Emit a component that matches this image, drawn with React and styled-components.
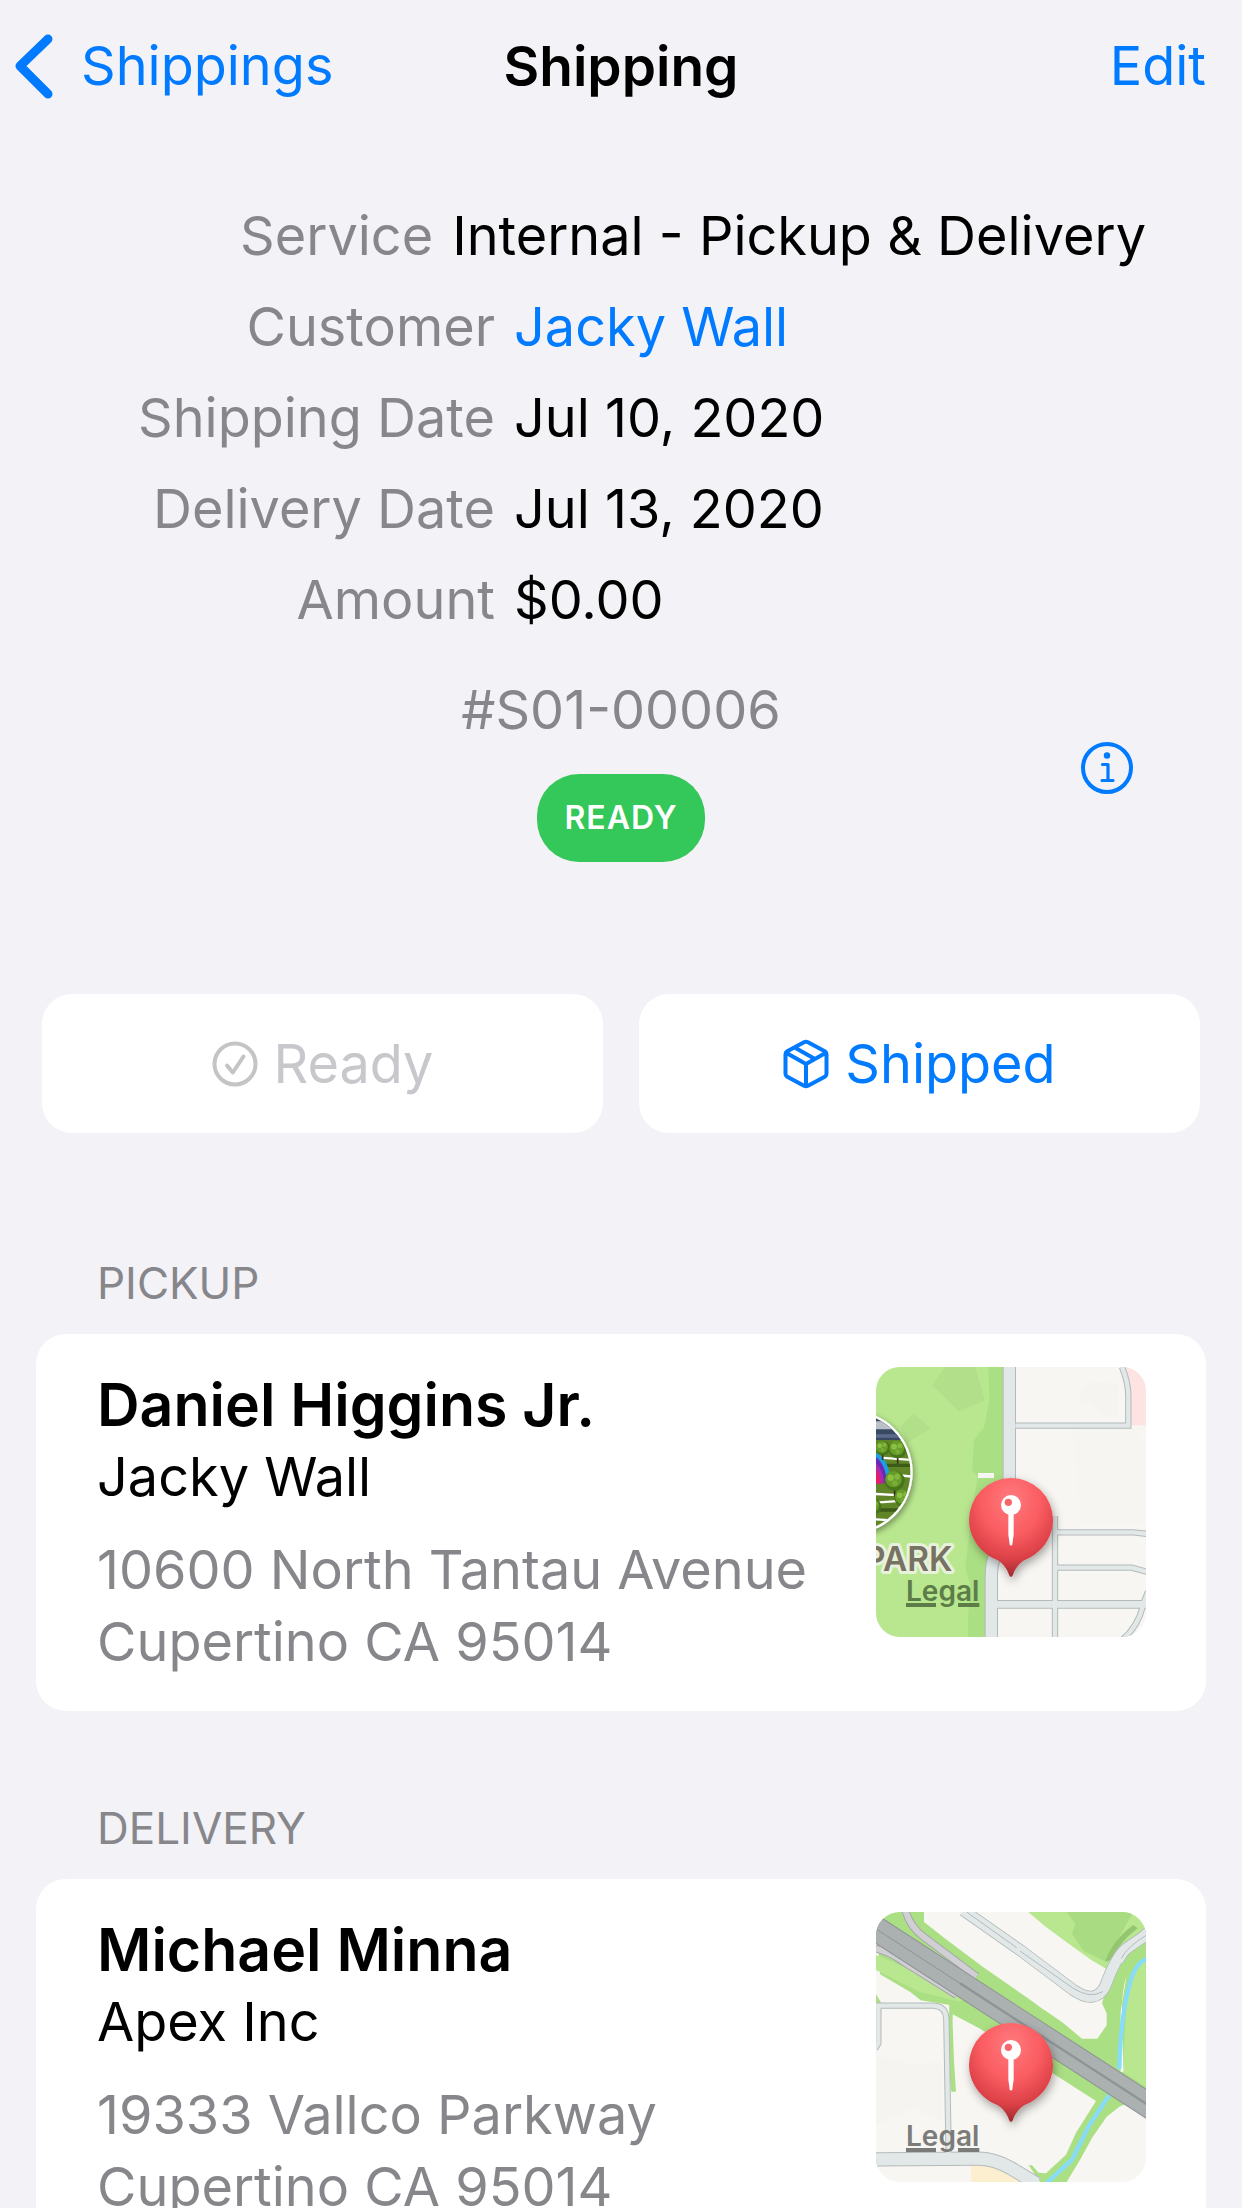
import styled, { createGlobalStyle } from "styled-components";

const GlobalStyle = createGlobalStyle`
  * {
    box-sizing: border-box;
  }
  body {
    margin: 0;
    background-color: #f2f2f7;
    color: #000;
    font-family: Inter, "Liberation Sans", sans-serif;
    font-size: 54px;
    line-height: 72px;
  }
`;

const Page = styled.div`
  height: 100vh;
  overflow-y: auto;
  scrollbar-width: none;
`;

const Header = styled.header`
  display: grid;
  grid-template-columns: 1fr auto 1fr;
  align-items: center;
  padding: 30px 36px;
`;

const BackLink = styled.a`
  display: flex;
  align-items: center;
  gap: 21px;
  margin-left: -24px;
  color: #007aff;
  text-decoration: none;
`;

const Title = styled.h1`
  margin: 0;
  font-size: 55px;
  font-weight: 600;
`;

const EditButton = styled.button`
  justify-self: end;
  padding: 0;
  border: none;
  background: none;
  color: #007aff;
  font: inherit;
  cursor: pointer;
`;

const Summary = styled.section`
  padding: 68px 96px 0;
`;

const Details = styled.dl`
  display: flex;
  flex-direction: column;
  gap: 19px;
  margin: 0;
`;

const Detail = styled.div`
  display: flex;
  gap: 19px;
`;

const Label = styled.dt`
  flex: 0 1 38%;
  color: #86868b;
  text-align: right;
  white-space: nowrap;
`;

const Value = styled.dd`
  flex: none;
  margin: 0;
`;

const CustomerLink = styled.a`
  color: #007aff;
  text-decoration: none;
`;

const StatusRow = styled.div`
  display: grid;
  grid-template-columns: 1fr auto 1fr;
  align-items: center;
  padding-top: 38px;
`;

const Status = styled.div`
  grid-column: 2;
  display: flex;
  flex-direction: column;
  align-items: center;
  gap: 28px;
`;

const Reference = styled.span`
  color: #86868b;
`;

const Badge = styled.span`
  padding: 20px 27px;
  border-radius: 42px;
  background-color: #34c759;
  color: white;
  font-size: 32px;
  font-weight: 600;
  line-height: 48px;
  letter-spacing: 1px;
`;

const InfoButton = styled.button`
  justify-self: end;
  display: flex;
  padding: 12px;
  border: none;
  background: none;
  color: #007aff;
  cursor: pointer;
`;

const Actions = styled.div`
  display: grid;
  grid-template-columns: 1fr 1fr;
  gap: 36px;
  padding: 132px 42px 0;
`;

const ActionButton = styled.button`
  display: flex;
  align-items: center;
  justify-content: center;
  gap: 16px;
  height: 139px;
  border: none;
  border-radius: 30px;
  background-color: white;
  color: #007aff;
  font: inherit;
  cursor: pointer;
  &:disabled {
    color: #c7c7cc;
    cursor: default;
  }
`;

const Stop = styled.section`
  padding: ${(props) => (props.$first ? "120px" : "87px")} 36px 0;
`;

const StopTitle = styled.h2`
  margin: 0;
  padding: 0 61px 21px;
  color: #86868b;
  font-size: 44px;
  font-weight: 400;
  line-height: 60px;
`;

const Card = styled.div`
  display: flex;
  justify-content: space-between;
  padding: 33px 60px 30px 61px;
  border-radius: 30px;
  background-color: white;
`;

const Contact = styled.div`
  padding-top: 2px;
`;

const Name = styled.h3`
  margin: 0;
  font-size: 59px;
  font-weight: 600;
`;

const Company = styled.p`
  margin: 0;
`;

const Address = styled.address`
  padding: 21px 0 3px;
  color: #86868b;
  font-style: normal;
`;

const MapBox = styled.div`
  position: relative;
  flex: none;
  width: 270px;
  height: 270px;
  border-radius: 24px;
  overflow: hidden;
`;

const Legal = styled.a`
  position: absolute;
  left: 30px;
  bottom: 30px;
  color: ${(props) => props.$color};
  font-size: 28px;
  font-weight: 600;
  line-height: 32px;
  text-decoration: underline;
  text-decoration-thickness: 4px;
`;

const BackIcon = () => (
  <svg width="48" height="70" viewBox="0 0 48 70" fill="none" aria-hidden="true">
    <path
      d="M36 8 8 35l28 28"
      stroke="currentColor"
      strokeWidth="9"
      strokeLinecap="round"
      strokeLinejoin="round"
    />
  </svg>
);

const InfoIcon = () => (
  <svg width="54" height="54" viewBox="0 0 54 54" fill="none" aria-hidden="true">
    <circle cx="27" cy="27" r="24" stroke="currentColor" strokeWidth="4" />
    <circle cx="27" cy="14.5" r="3.2" fill="currentColor" />
    <path
      d="M22.500 23.500H28V39.500M22 39.500H33"
      stroke="currentColor"
      strokeWidth="3.200"
      strokeLinecap="round"
      strokeLinejoin="round"
    />
  </svg>
);

const CheckIcon = () => (
  <svg width="46" height="46" viewBox="0 0 46 46" fill="none" aria-hidden="true">
    <circle cx="23" cy="23" r="20.500" stroke="#c4c4c4" strokeWidth="4" />
    <path
      d="M15 24.500 20.800 31.500 31.500 15.500"
      stroke="#c4c4c4"
      strokeWidth="4"
      strokeLinecap="round"
      strokeLinejoin="round"
    />
  </svg>
);

const BoxIcon = () => (
  <svg width="46" height="50" viewBox="0 0 46 50" fill="none" aria-hidden="true">
    <path
      d="M21 3.200 3.800 12.600Q2.500 13.500 2.500 15.200V34.800Q2.500 36.500 3.800 37.400L21 46.800Q23 47.800 25 46.800L42.200 37.400Q43.500 36.500 43.500 34.800V15.200Q43.500 13.500 42.200 12.600L25 3.200Q23 2.200 21 3.200ZM3.500 14 23 25 42.500 14M23 25V47M12.500 9 32 20"
      stroke="currentColor"
      strokeWidth="4"
      strokeLinejoin="round"
    />
  </svg>
);

const Pin = () => (
  <g>
    <defs>
      <radialGradient id="pinFill" cx="0.5" cy="0.22" r="0.8">
        <stop offset="0" stopColor="#ff7a7d" />
        <stop offset="0.45" stopColor="#fa5c61" />
        <stop offset="0.75" stopColor="#dc4147" />
        <stop offset="1" stopColor="#96262c" />
      </radialGradient>
      <filter id="pinShadow" x="-30%" y="-30%" width="160%" height="160%">
        <feDropShadow dx="5" dy="12" stdDeviation="14" floodOpacity="0.35" />
      </filter>
    </defs>
    <path
      d="M453 384a126 126 0 0 1 126 126c0 52-34 98-80 118-22 10-33 28-40 46q-6 13-12 0c-7-18-18-36-40-46-46-20-80-66-80-118a126 126 0 0 1 126-126Z"
      fill="url(#pinFill)"
      filter="url(#pinShadow)"
    />
    <path d="M445 488h16v66l-4 29q-4 8-8 0l-4-29Z" fill="white" />
    <circle cx="453" cy="465" r="30" fill="white" />
    <circle cx="445" cy="457" r="11" fill="#f7666b" />
  </g>
);

const Tree = ({ x, y, r }) => (
  <g>
    <path d={`M${x} ${y}v${r * 1.6}`} stroke="#3a2f14" strokeWidth="5" />
    <circle cx={x} cy={y} r={r} fill="#47741a" />
    <circle cx={x - r * 0.1} cy={y - r * 0.15} r={r * 0.82} fill="#669c28" />
    <circle cx={x - r * 0.4} cy={y - r * 0.3} r={r * 0.32} fill="#8cc044" />
    <circle cx={x + r * 0.25} cy={y - r * 0.4} r={r * 0.28} fill="#82b63c" />
    <circle cx={x} cy={y + r * 0.25} r={r * 0.27} fill="#79ad35" />
  </g>
);

const ParkMap = () => (
  <svg width="270" height="270" viewBox="48 51 810 810" role="img" aria-label="Pickup map">
    <defs>
      <clipPath id="photo">
        <circle cx="-27" cy="367" r="178" />
      </clipPath>
      <filter id="photoShadow" x="-30%" y="-30%" width="160%" height="160%">
        <feDropShadow dx="4" dy="8" stdDeviation="10" floodOpacity="0.4" />
      </filter>
    </defs>
    <rect x="48" y="51" width="810" height="810" fill="#f7f6f2" />
    <path d="M660 120l40-25 75 5-4 105-45-10-30-30-36-10Z" fill="#f5f4f0" />
    <path d="M640 240l180-10 38 60v230H660Z" fill="#f6f5f1" />
    <path d="M795 51h63v175h-48V110Z" fill="#fde3e2" />
    {/* park */}
    <path d="M48 51H432V590L378 640V861H48Z" fill="#b9e78f" />
    <path
      d="M385 51h47v540l-50 40-4 230h-54v-60l8-90-16-60 14-120 22-150-16-20 6-90 30-40 16-80Z"
      fill="#abdf84"
    />
    <path d="M255 51h90l30 100-78 34-80-80Z" fill="#b2df8a" />
    <path d="M160 190l52 45-70 44-20-50Z" fill="#b2df8a" />
    {/* streets */}
    <g fill="none" stroke="#b3babb">
      <path d="M786 51q20 50 19 90v86H466" strokeWidth="19" />
      <path d="M585 498V861" strokeWidth="19" />
      <path d="M585 547h235l45 5M585 653h230l45 12" strokeWidth="19" />
      <path d="M848 770q-15 60-60 98M848 765l16-40" strokeWidth="19" />
      <path d="M394 763H858" strokeWidth="26" />
      <path d="M448 51V560Q394 600 394 680V861" strokeWidth="40" />
    </g>
    <g fill="none" stroke="#e2e8e8">
      <path d="M786 51q20 50 19 90v86H466" strokeWidth="13" />
      <path d="M585 498V861" strokeWidth="13" />
      <path d="M585 547h235l45 5M585 653h230l45 12" strokeWidth="13" />
      <path d="M848 770q-15 60-60 98M848 765l16-40" strokeWidth="13" />
      <path d="M394 763H858" strokeWidth="20" />
      <path d="M448 51V560Q394 600 394 680V861" strokeWidth="34" />
    </g>
    <rect x="354" y="369" width="48" height="15" fill="#f7f6f2" />
    {/* landmark photo */}
    <circle cx="-27" cy="367" r="185" fill="white" filter="url(#photoShadow)" />
    <g clipPath="url(#photo)">
      <rect x="48" y="180" width="120" height="380" fill="#5f8526" />
      <rect x="48" y="180" width="120" height="90" fill="#3a4963" />
      <path d="M48 226h110" stroke="#b9c0ca" strokeWidth="24" />
      <path d="M48 258h110" stroke="#5a6c8a" strokeWidth="10" />
      <path d="M48 346h110M48 480h110" stroke="#3d5b18" strokeWidth="10" />
      <path
        d="M48 322l110 8M80 372l78 8M48 432l80 4M48 458l110-8M48 508l60 4"
        stroke="white"
        strokeWidth="7"
      />
      <path d="M48 308q36 14 46 90H48Z" fill="#1aa0e0" />
      <path d="M48 322q28 20 34 78H48Z" fill="#6a28b8" />
      <path d="M48 340q20 18 25 60H48Z" fill="#a72bb0" />
      <path d="M48 356q12 14 15 45H48Z" fill="#e81b6b" />
      <Tree x={68} y={294} r={22} />
      <Tree x={113} y={298} r={27} />
      <Tree x={104} y={392} r={30} />
      <Tree x={130} y={444} r={27} />
      <Tree x={40} y={470} r={24} />
    </g>
    <text
      x="277"
      y="663"
      textAnchor="end"
      fontSize="100"
      fontWeight="600"
      fill="#777262"
      stroke="#e8f1dc"
      strokeWidth="18"
      strokeLinejoin="round"
      paintOrder="stroke"
    >
      PARK
    </text>
    <Pin />
  </svg>
);

const FreewayMap = () => (
  <svg width="270" height="270" viewBox="48 51 810 810" role="img" aria-label="Delivery map">
    <rect x="48" y="51" width="810" height="810" fill="#f7f6f2" />
    <path d="M48 480l110 30 90-10v180l-90-40-110 50Z" fill="#f5f4f0" />
    {/* greenery */}
    <path
      d="M48 51h144v30l66 52 112 84 130 90 44 32 62 42 60 50h46l28-40v-36l-14-30 20-70 32-52 80-110V600l-80 35-38 30-44 64-34 62-42 70H540l-34-50 10 0 20 22 22 2 60-56 30-66 60-95-125-80-130-75-90-60-85-45v30l4 110 6 92h-14l-10-100 4-160-20-4-66-10-30-24-92-54Z"
      fill="#abdf84"
    />
    <path d="M505 51h353v60l-70 50-44 64-50-30-70-50-70-52Z" fill="#b9e78f" />
    <path d="M620 51h200l-40 70-40 80-70-34-34-50 10-30Z" fill="#a9db83" />
    <path d="M858 190q-50 50-58 140l-12 200 70 45Z" fill="#b9e78f" />
    <path d="M48 180l140 60 130 70-20 10-120-30L48 225Z" fill="#b9e78f" />
    <path d="M48 298l16 26H48Z" fill="#abdf84" />
    <path d="M800 240q-14 50-14 100l4 190h-8V350Z" fill="white" />
    <path d="M820 90q-62 45-85 110l18-4q30-60 80-96Z" fill="#93c66f" />
    {/* creek */}
    <path
      d="M862 192q-38 10-54 80-26 90-30 250M748 600l-60 90-52 104-78 72"
      fill="none"
      stroke="#87dcf8"
      strokeWidth="13"
    />
    <rect x="333" y="811" width="150" height="50" fill="#fbefcf" />
    {/* streets */}
    <g fill="none" stroke="#b3babb" strokeLinejoin="round">
      <path d="M48 332H220Q258 334 259 372L266 780" strokeWidth="19" />
      <path d="M55 332V445L45 462" strokeWidth="19" />
      <path d="M48 793L350 791Q400 790 450 818L530 866" strokeWidth="43" />
      <path d="M310 46L480 165 640 285Q705 330 735 275 770 180 800 160L862 118" strokeWidth="36" />
      <path d="M780 200Q800 160 862 105" strokeWidth="22" />
    </g>
    <g fill="none" stroke="#e2e8e8" strokeLinejoin="round">
      <path d="M48 332H220Q258 334 259 372L266 780" strokeWidth="13" />
      <path d="M55 332V445L45 462" strokeWidth="13" />
      <path d="M48 793L350 791Q400 790 450 818L530 866" strokeWidth="37" />
      <path d="M310 46L480 165 640 285Q705 330 735 275 770 180 800 160L862 118" strokeWidth="31" />
      <path d="M780 200Q800 160 862 105" strokeWidth="17" />
    </g>
    <path
      d="M480 168L640 280Q690 312 728 290M320 51L470 158M784 190Q802 155 860 120"
      fill="none"
      stroke="#b3babb"
      strokeWidth="3"
    />
    {/* ramps and freeway */}
    <path
      d="M136 46Q150 95 190 125L350 245M40 160Q80 165 130 200L290 300"
      fill="none"
      stroke="#a6a6ab"
      strokeWidth="24"
    />
    <path
      d="M136 46Q150 95 190 125L350 245M40 160Q80 165 130 200L290 300"
      fill="none"
      stroke="#cfcfd4"
      strokeWidth="18"
    />
    <path d="M30 90L880 640" stroke="#8e9394" strokeWidth="76" />
    <path d="M30 90L880 640" stroke="#abb0b1" strokeWidth="70" />
    <path d="M30 90L300 265" stroke="#8e9394" strokeWidth="3" />
    <path d="M300 265L880 640" stroke="#8e9394" strokeWidth="7" />
    <Pin />
  </svg>
);

const DETAILS = [
  { label: "Service", value: "Internal - Pickup & Delivery" },
  { label: "Customer", value: "Jacky Wall", link: true },
  { label: "Shipping Date", value: "Jul 10, 2020" },
  { label: "Delivery Date", value: "Jul 13, 2020" },
  { label: "Amount", value: "$0.00" },
];

const STOPS = [
  {
    title: "PICKUP",
    name: "Daniel Higgins Jr.",
    company: "Jacky Wall",
    street: "10600 North Tantau Avenue",
    city: "Cupertino CA 95014",
    Map: ParkMap,
    legalColor: "#5c7c48",
  },
  {
    title: "DELIVERY",
    name: "Michael Minna",
    company: "Apex Inc",
    street: "19333 Vallco Parkway",
    city: "Cupertino CA 95014",
    Map: FreewayMap,
    legalColor: "#7b7b79",
  },
];

const App = () => {
  return (
    <Page>
      <GlobalStyle />
      <Header>
        <BackLink href="#shippings">
          <BackIcon />
          Shippings
        </BackLink>
        <Title>Shipping</Title>
        <EditButton type="button">Edit</EditButton>
      </Header>
      <main>
        <Summary>
          <Details>
            {DETAILS.map(({ label, value, link }) => (
              <Detail key={label}>
                <Label>{label}</Label>
                <Value>
                  {link ? (
                    <CustomerLink href="#customer">{value}</CustomerLink>
                  ) : (
                    value
                  )}
                </Value>
              </Detail>
            ))}
          </Details>
          <StatusRow>
            <Status>
              <Reference>#S01-00006</Reference>
              <Badge>READY</Badge>
            </Status>
            <InfoButton type="button" aria-label="Info">
              <InfoIcon />
            </InfoButton>
          </StatusRow>
        </Summary>
        <Actions>
          <ActionButton type="button" disabled>
            <CheckIcon />
            Ready
          </ActionButton>
          <ActionButton type="button">
            <BoxIcon />
            Shipped
          </ActionButton>
        </Actions>
        {STOPS.map(
          ({ title, name, company, street, city, Map, legalColor }, index) => (
            <Stop key={title} $first={index === 0}>
              <StopTitle>{title}</StopTitle>
              <Card>
                <Contact>
                  <Name>{name}</Name>
                  <Company>{company}</Company>
                  <Address>
                    {street}
                    <br />
                    {city}
                  </Address>
                </Contact>
                <MapBox>
                  <Map />
                  <Legal href="#legal" $color={legalColor}>
                    Legal
                  </Legal>
                </MapBox>
              </Card>
            </Stop>
          )
        )}
      </main>
    </Page>
  );
};

export default App;
